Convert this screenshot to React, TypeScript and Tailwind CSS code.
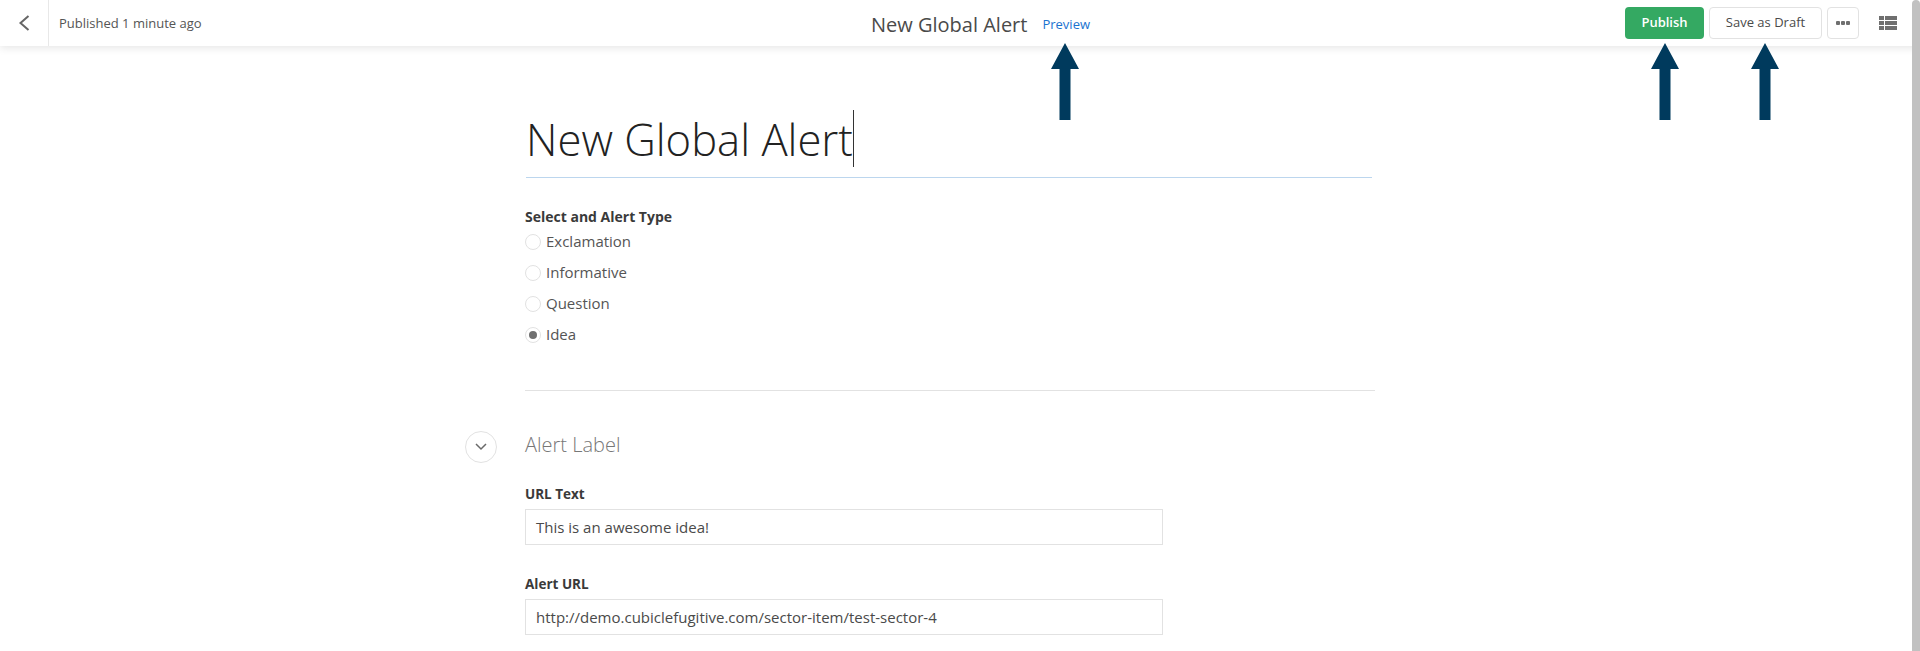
const font = { fontFamily: '"Open Sans", sans-serif' }

function UpArrow({ className }: { className: string }) {
  return (
    <svg className={className} width="28" height="77" viewBox="0 0 28 77">
      <path d="M14 0 L28 26 L19.5 26 L19.5 77 L8.5 77 L8.5 26 L0 26 Z" fill="#003a5d" />
    </svg>
  )
}

function Radio({ label, checked }: { label: string; checked?: boolean }) {
  return (
    <div className="flex h-[31px] items-center">
      <span className="flex size-4 items-center justify-center rounded-full border border-[#e2e2e2] bg-white">
        {checked && <span className="size-2 rounded-full bg-[#6f6f6f]" />}
      </span>
      <span className="ml-[5px] text-[15px] text-[#555]">{label}</span>
    </div>
  )
}

function Field({ label, value }: { label: string; value: string }) {
  return (
    <div className="mb-[30px]">
      <div className="mb-[6px] text-[13.5px] leading-[18px] font-bold text-[#3a3a3a]">{label}</div>
      <div className="flex h-9 w-[638px] items-center border border-[#e2e2e2] px-[10px] text-[15px] text-[#4a4a4a]">{value}</div>
    </div>
  )
}

export default function App() {
  return (
    <div className="relative h-[651px] overflow-hidden bg-white" style={font}>
      <header className="relative flex h-[46px] items-center pr-[23px] shadow-[0_2px_8px_rgba(0,0,0,0.1)]">
        <div className="flex h-full w-[49px] items-center justify-center border-r border-[#e8e8e8]">
          <svg width="14" height="18" viewBox="0 0 14 18" fill="none" stroke="#666" strokeWidth="2">
            <path d="M11.5 2 L3.5 9 L11.5 16" />
          </svg>
        </div>
        <span className="ml-[10px] pt-[2px] text-[13px] text-[#555]">Published 1 minute ago</span>
        <div className="absolute top-0 left-[871px] flex h-full items-center pt-[3px]">
          <span className="text-xl text-[#4a4a4a]">New Global Alert</span>
          <span className="ml-[15px] text-[13px] text-[#1a73d0]">Preview</span>
        </div>
        <div className="ml-auto flex items-center">
          <button className="h-8 w-[79px] rounded-sm bg-[#34a962] text-[13px] font-semibold text-white">Publish</button>
          <button className="ml-[5px] h-8 w-[113px] rounded-sm border border-[#e2e2e2] text-[13px] text-[#4a4a4a]">Save as Draft</button>
          <button className="ml-[5px] flex h-8 w-8 items-center justify-center rounded-sm border border-[#e2e2e2]">
            <svg width="14" height="4" viewBox="0 0 14 4" fill="#6f6f6f">
              <rect x="0" y="0" width="4" height="4" rx="1" />
              <rect x="5" y="0" width="4" height="4" rx="1" />
              <rect x="10" y="0" width="4" height="4" rx="1" />
            </svg>
          </button>
          <svg className="ml-5" width="18" height="14" viewBox="0 0 18 14" fill="#6f6f6f">
            <rect x="0" y="0" width="5" height="4" />
            <rect x="6" y="0" width="12" height="4" />
            <rect x="0" y="5" width="5" height="4" />
            <rect x="6" y="5" width="12" height="4" />
            <rect x="0" y="10" width="5" height="4" />
            <rect x="6" y="10" width="12" height="4" />
          </svg>
        </div>
      </header>

      <div className="absolute top-0 right-0 bottom-0 w-2 rounded-t-sm bg-[#c1c1c1]" />

      <UpArrow className="absolute top-[43px] left-[1051px]" />
      <UpArrow className="absolute top-[43px] left-[1651px]" />
      <UpArrow className="absolute top-[43px] left-[1751px]" />

      <main className="relative ml-[525px] w-[850px] pt-[60px]">
        <div className="relative ml-[1px] h-[72px] w-[846px] border-b border-[#bcd6ee] text-[43.6px] leading-[67px] font-light text-[#222]">
          New Global Alert
          <span className="absolute top-[4px] left-[327px] h-[57px] w-px bg-[#333]" />
        </div>
        <div className="mt-[30px] text-sm leading-[18px] font-bold text-[#3a3a3a]">Select and Alert Type</div>
        <div>
          <Radio label="Exclamation" />
          <Radio label="Informative" />
          <Radio label="Question" />
          <Radio label="Idea" checked />
        </div>
        <div className="mt-[40px] border-t border-[#e2e2e2]" />
        <div className="relative mt-[39px] h-[30px] text-xl leading-[30px] font-light text-[#777]">
          Alert Label
          <span className="absolute top-[1px] -left-[60px] flex size-8 items-center justify-center rounded-full border border-[#e2e2e2]">
            <svg width="12" height="8" viewBox="0 0 12 8" fill="none" stroke="#6a6a6a" strokeWidth="1.5">
              <path d="M1 1 L6 6 L11 1" />
            </svg>
          </span>
        </div>
        <div className="mt-[25px]">
          <Field label="URL Text" value="This is an awesome idea!" />
          <Field label="Alert URL" value="http://demo.cubiclefugitive.com/sector-item/test-sector-4" />
        </div>
      </main>
    </div>
  )
}
